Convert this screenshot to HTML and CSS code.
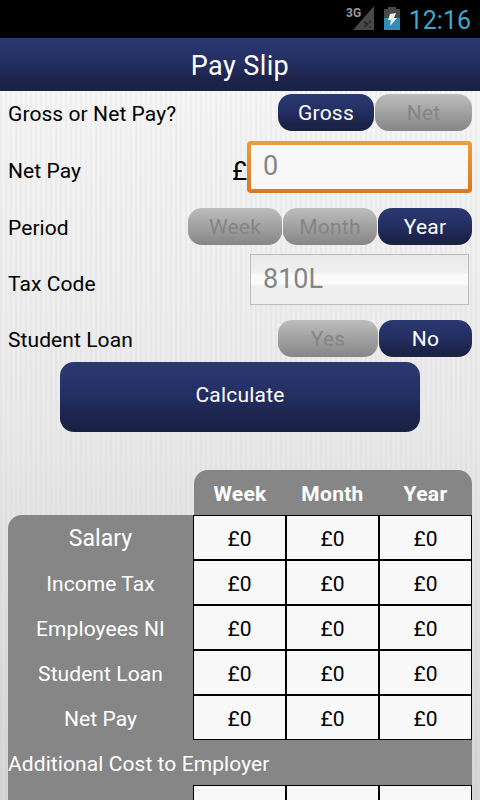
FILE: index.html
```html
<!DOCTYPE html>
<html lang="en">
<head>
  <meta charset="UTF-8">
  <title>Pay Slip</title>
  <link rel="stylesheet" href="styles.css">
</head>
<body>
  <!-- Status bar -->
  <div class="status-bar">
    <svg class="signal" width="28" height="26" viewBox="0 0 28 26">
      <path d="M27 0V24H6Z" fill="#484848"/>
      <path d="M17 16l4 2-4 3M24 15l-2 1M24 21h-2" fill="none" stroke="#252525" stroke-width="1.5"/>
      <text x="-1" y="11" class="network">3G</text>
    </svg>
    <svg class="battery" width="16" height="24" viewBox="0 0 16 24">
      <path d="M4 0h8v2h4v9H0V2h4Z" fill="#484848"/>
      <path d="M0 11h16v12H0Z" fill="#2f8fb0"/>
      <path d="M6 7l6-1-2 5h3l-7 8 1-6H4Z" fill="#eee"/>
    </svg>
    <span class="clock">12:16</span>
  </div>

  <div class="header">
    <h1>Pay Slip</h1>
  </div>

  <form id="paySlipForm">
    <!-- Gross or Net -->
    <div class="row first">
      <label>Gross or Net Pay?</label>
      <div class="buttons two">
        <button type="button" class="option selected">Gross</button>
        <button type="button" class="option">Net</button>
      </div>
    </div>

    <!-- Amount -->
    <div class="row">
      <label for="pay">Net Pay</label>
      <span class="currency">£</span>
      <input type="text" id="pay" class="focused" placeholder="0">
    </div>

    <!-- Period -->
    <div class="row">
      <label>Period</label>
      <div class="buttons three">
        <button type="button" class="option">Week</button>
        <button type="button" class="option">Month</button>
        <button type="button" class="option selected">Year</button>
      </div>
    </div>

    <!-- Tax Code -->
    <div class="row">
      <label for="taxCode">Tax Code</label>
      <input type="text" id="taxCode" class="plain" placeholder="810L">
    </div>

    <!-- Student Loan -->
    <div class="row last">
      <label>Student Loan</label>
      <div class="buttons loan">
        <button type="button" class="option">Yes</button>
        <button type="button" class="option selected">No</button>
      </div>
    </div>

    <button type="button" class="calculate">Calculate</button>
  </form>

  <!-- Results -->
  <div class="results">
    <div class="periods">
      <div>Week</div>
      <div>Month</div>
      <div>Year</div>
    </div>
    <div class="table">
      <div class="name salary">Salary</div>
      <div class="cell">£0</div>
      <div class="cell">£0</div>
      <div class="cell">£0</div>
      <div class="name">Income Tax</div>
      <div class="cell">£0</div>
      <div class="cell">£0</div>
      <div class="cell">£0</div>
      <div class="name">Employees NI</div>
      <div class="cell">£0</div>
      <div class="cell">£0</div>
      <div class="cell">£0</div>
      <div class="name">Student Loan</div>
      <div class="cell">£0</div>
      <div class="cell">£0</div>
      <div class="cell">£0</div>
      <div class="name">Net Pay</div>
      <div class="cell">£0</div>
      <div class="cell">£0</div>
      <div class="cell">£0</div>
      <div class="section">Additional Cost to Employer</div>
      <div class="name"></div>
      <div class="cell"></div>
      <div class="cell"></div>
      <div class="cell"></div>
    </div>
  </div>
</body>
</html>
```

FILE: styles.css
```css
html {
  height: 100%;
  overflow: hidden;
}
body {
  font-family: Roboto, "Liberation Sans", sans-serif;
  font-size: 21px;
  letter-spacing: 0.08px;
  color: #000;
  height: 800px;
  margin: 0;
  overflow: hidden;
  background:
    repeating-linear-gradient(90deg, rgba(0,0,0,0.025) 0 2px, transparent 2px 5px),
    linear-gradient(#f5f5f5 90px, #e8e8e8 450px, #d6d6d6 800px);
}
.status-bar {
  display: flex;
  justify-content: flex-end;
  box-sizing: border-box;
  height: 38px;
  padding: 6px 9px 0 0;
  background: #000;
}
.signal {
  margin-right: 9px;
  overflow: visible;
}
.network {
  font-size: 12px;
  font-weight: bold;
  letter-spacing: 0;
  fill: #999;
}
.battery {
  margin: 1px 9px 0 0;
}
.clock {
  font-size: 25px;
  line-height: 29px;
  letter-spacing: 0;
  color: #3da9cc;
}
.header {
  height: 53px;
  background: linear-gradient(#2a3871, #232e61 50%, #1d234b 75%, #182344);
}
h1 {
  margin: 0;
  font-size: 27px;
  font-weight: normal;
  letter-spacing: 0.4px;
  line-height: 57px;
  text-align: center;
  color: #fff;
}
form {
  height: 379px;
}
.row {
  display: flex;
  align-items: center;
  height: 56.5px;
  padding: 0 8px;
}
.first {
  height: 45px;
  padding-bottom: 6.5px;
}
.last {
  height: 45px;
  padding-top: 5px;
}
label {
  flex: 1;
  padding-top: 1px;
}
.buttons {
  display: grid;
  gap: 1px;
  margin-top: -2px;
}
.two {
  grid-template-columns: 96px 97px;
}
.three {
  grid-template-columns: 94px 94px 94px;
}
.loan {
  grid-template-columns: 100px 93px;
}
button {
  padding: 0;
  border: none;
  font: inherit;
}
.option {
  height: 37px;
  padding-top: 1px;
  letter-spacing: 0.2px;
  border-radius: 14px;
  background: linear-gradient(#bdbdbd, #868686);
  color: #858585;
}
.selected,
.calculate {
  background: linear-gradient(#2a3a72, #232e61 50%, #1d234b 80%, #182344);
  color: #fff;
}
.currency {
  font-size: 26px;
  letter-spacing: 0;
}
input {
  box-sizing: border-box;
  font: inherit;
  font-size: 27px;
}
input::placeholder {
  color: #858585;
  opacity: 1;
}
.focused {
  width: 225px;
  height: 52px;
  margin-top: -7px;
  padding: 0 12px 3px;
  border: 4px solid transparent;
  border-radius: 4px;
  background:
    linear-gradient(#f8f8f8, #f8f8f8) padding-box,
    linear-gradient(#e9a03c, #dc7620) border-box;
}
.plain {
  width: 219px;
  height: 51px;
  margin: -8px 3px 0 0;
  padding: 0 12px 1px;
  border: 1px solid #bbb;
  background: linear-gradient(#eaeaea, #f0f0f0 35%, #fafafa 40% 58%, #efefef 64%);
}
.calculate {
  display: block;
  width: 360px;
  height: 70px;
  margin: 0 auto;
  padding-bottom: 5px;
  letter-spacing: 0.2px;
  border-radius: 14px;
}
.results {
  margin: 0 8px;
}
.periods {
  display: grid;
  grid-template-columns: 92px 93px 93px;
  margin-left: 186px;
  border-radius: 14px 14px 0 0;
  background: #868686;
  color: #fff;
  font-weight: bold;
  letter-spacing: 0.3px;
  line-height: 48px;
  height: 45px;
  text-align: center;
}
.table {
  display: grid;
  grid-template-columns: 185px 93px 93px 93px;
  grid-auto-rows: 45px;
  border-radius: 14px 0 0 0;
  background: #868686;
  line-height: 46px;
  text-align: center;
}
.name,
.section {
  line-height: 48px;
  color: #fff;
}
.salary {
  font-size: 23px;
}
.cell {
  border: 1px solid #000;
  background: #f8f8f8;
}
.section {
  grid-column: 1 / -1;
  text-align: left;
}
```
